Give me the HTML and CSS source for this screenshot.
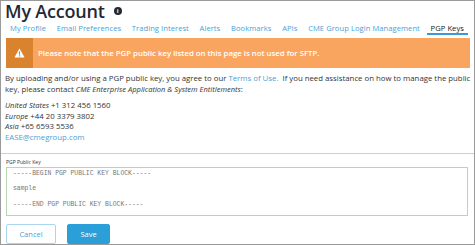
FILE: index.html
```html
<!DOCTYPE html>
<html>
<head>
<meta charset="utf-8">
<link rel="stylesheet" href="styles.css">
</head>
<body>
<div class="page">
  <div class="title-row">
    <h1 class="title">My Account</h1>
    <span class="info">i</span>
  </div>
  <nav class="tabs">
    <a class="tab">My Profile</a>
    <a class="tab">Email Preferences</a>
    <a class="tab">Trading Interest</a>
    <a class="tab">Alerts</a>
    <a class="tab">Bookmarks</a>
    <a class="tab">APIs</a>
    <a class="tab">CME Group Login Management</a>
    <a class="tab active">PGP Keys</a>
  </nav>
  <div class="banner">
    <div class="banner-icon">
      <svg width="11" height="10" viewBox="0 0 11 10"><path d="M5.5 0.5 L10.6 9.5 L0.4 9.5 Z" fill="#fff"/><rect x="4.9" y="3.3" width="1.2" height="3.4" fill="#d9832f"/><rect x="4.9" y="7.3" width="1.2" height="1.2" fill="#d9832f"/></svg>
    </div>
    <div class="banner-text">Please note that the PGP public key listed on this page is not used for SFTP.</div>
  </div>
  <p class="intro">By uploading and/or using a PGP public key, you agree to our <a class="link">Terms of Use.</a>&nbsp; If you need assistance on how to manage the public key, please contact <em>CME Enterprise Application &amp; System Entitlements</em>:</p>
  <div class="contacts">
    <div><em>United States</em> +1 312 456 1560</div>
    <div><em>Europe</em> +44 20 3379 3802</div>
    <div><em>Asia</em> +65 6593 5536</div>
    <div><a class="link">EASE@cmegroup.com</a></div>
  </div>
  <hr class="sep">
  <div class="field">
    <label class="label">PGP Public Key</label>
    <div class="keybox">-----BEGIN PGP PUBLIC KEY BLOCK-----

sample

-----END PGP PUBLIC KEY BLOCK-----</div>
  </div>
  <div class="actions">
    <button class="btn cancel">Cancel</button>
    <button class="btn save">Save</button>
  </div>
</div>
</body>
</html>
```
FILE: styles.css
```css
* { box-sizing: border-box; }
html, body { margin: 0; padding: 0; }
body {
  width: 475px;
  height: 245px;
  overflow: hidden;
  background: #fff;
  font-family: "Open Sans", "Noto Sans", sans-serif;
  color: #333;
}
.page {
  width: 475px;
  height: 245px;
  border: 1px solid #9a9a9a;
  padding: 0 3px 0 4px;
}
.title-row {
  display: flex;
  align-items: center;
  gap: 9px;
  height: 20px;
}
.title {
  margin: 0;
  font-size: 18px;
  font-weight: 600;
  color: #1f2a36;
  letter-spacing: -0.2px;
  line-height: 20px;
}
.info {
  width: 8px;
  height: 8px;
  border-radius: 50%;
  background: #1f2a36;
  color: #fff;
  font-size: 6px;
  font-weight: 700;
  display: flex;
  align-items: center;
  justify-content: center;
  line-height: 1;
}
.tabs {
  display: flex;
  justify-content: space-between;
  height: 14px;
  padding: 0 3px 0 5px;
}
.tab {
  font-size: 7.6px;
  color: #4b9fd5;
  line-height: 12px;
  padding: 1px 0 0;
  letter-spacing: 0.05px;
}
.tab.active {
  color: #222;
  border-bottom: 2px solid #3a9ad9;
  padding: 1px 4px 0;
  margin-left: -4px;
}
.banner {
  display: flex;
  margin: 3px 1px 0 1px;
  height: 30px;
  background: #f9a560;
}
.banner-icon {
  width: 27px;
  background: #d9832f;
  display: flex;
  align-items: center;
  justify-content: center;
}
.banner-text {
  color: #fff;
  font-weight: 600;
  font-size: 7.8px;
  display: flex;
  align-items: center;
  padding-left: 5px;
}
.intro {
  margin: 5px 0 0;
  font-size: 7.8px;
  line-height: 11px;
  color: #333;
}
.intro em, .contacts em {
  font-family: "Noto Sans", "DejaVu Sans", sans-serif;
  font-style: italic;
  font-weight: 400;
  font-size: 7.5px;
  color: #444;
}
.link { color: #4b9fd5; }
.contacts {
  margin-top: 5px;
  font-size: 7.8px;
  line-height: 10.5px;
  color: #333;
}
.sep {
  margin: 11px -3px 0 -4px;
  border: 0;
  border-top: 1.5px solid #cfcfcf;
}
.field { padding: 0 1px; }
.label {
  display: block;
  font-size: 5px;
  color: #333;
  margin-top: 5px;
  line-height: 7px;
}
.keybox {
  margin-top: 1px;
  height: 49px;
  border: 1px solid #b9d6b4;
  white-space: pre;
  font-family: "Liberation Mono", "DejaVu Sans Mono", monospace;
  font-size: 6.4px;
  line-height: 7.7px;
  color: #777;
  padding: 2px 6px;
  margin-right: 2px;
}
.actions {
  display: flex;
  gap: 11px;
  margin-top: 8px;
  padding-left: 1px;
}
.btn {
  height: 20px;
  font-family: inherit;
  font-size: 7.5px;
  border-radius: 2px;
  padding: 0;
}
.cancel {
  width: 50px;
  background: #fff;
  border: 1px solid #a9d5ef;
  color: #4b9fd5;
}
.save {
  width: 43px;
  background: #2a9fd8;
  border: 1px solid #2a9fd8;
  color: #fff;
}
```
